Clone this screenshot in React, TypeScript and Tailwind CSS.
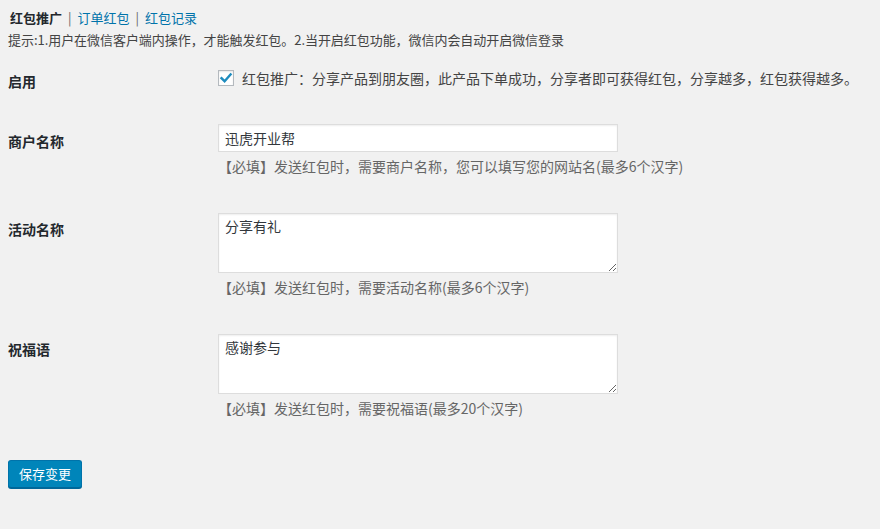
import React from 'react';

const font = "font-['Noto_Sans_CJK_SC','Noto_Sans',sans-serif]";

const Checkbox = () => (
  <span className="w-4 h-4 shrink-0 bg-white border border-[#b4b9be] shadow-[inset_0_1px_2px_rgba(0,0,0,0.1)] flex items-center justify-center">
    <svg width="14" height="14" viewBox="0 0 14 14">
      <path d="M2.5 7.2 L5.6 10.2 L11.6 3.4" fill="none" stroke="#1e8cbe" strokeWidth="2.4" strokeLinecap="square" />
    </svg>
  </span>
);

const Desc = ({ children }: { children: React.ReactNode }) => (
  <p className="mt-1 text-[14px] leading-5 text-[#666]">{children}</p>
);

export default function App() {
  return (
    <div className={`min-h-[529px] bg-[#f1f1f1] px-2 ${font}`}>
      {/* tabs */}
      <div className="pt-[9px] pl-[2px] text-[13px] leading-[18px] flex items-center">
        <span className="font-bold text-[#23282d]">红包推广</span>
        <span className="text-[#666] px-[6px]">|</span>
        <a className="text-[#0073aa]">订单红包</a>
        <span className="text-[#666] px-[6px]">|</span>
        <a className="text-[#0073aa]">红包记录</a>
      </div>
      <p className="mt-1 text-[13px] leading-[18px] tracking-[-0.05px] text-[#444]">
        提示:1.用户在微信客户端内操作，才能触发红包。2.当开启红包功能，微信内会自动开启微信登录
      </p>

      {/* form table */}
      <div className="flex h-[63px]">
        <div className="w-[210px] pt-[22px] text-[14px] leading-5 font-bold text-[#23282d]">启用</div>
        <div className="pt-[19px]">
          <label className="flex items-center gap-2 text-[14px] leading-5 text-[#444]">
            <Checkbox />
            红包推广：分享产品到朋友圈，此产品下单成功，分享者即可获得红包，分享越多，红包获得越多。
          </label>
        </div>
      </div>

      <div className="flex pb-6">
        <div className="w-[210px] pt-[19px] text-[14px] leading-5 font-bold text-[#23282d]">商户名称</div>
        <div className="pt-3">
          <input
            defaultValue="迅虎开业帮"
            className="block w-[400px] h-[28px] bg-white border border-[#ddd] shadow-[inset_0_1px_2px_rgba(0,0,0,0.07)] px-[6px] text-[14px] text-[#32373c] outline-none"
          />
          <Desc>【必填】发送红包时，需要商户名称，您可以填写您的网站名(最多6个汉字)</Desc>
        </div>
      </div>

      <div className="flex pb-[23px]">
        <div className="w-[210px] pt-[19px] text-[14px] leading-5 font-bold text-[#23282d]">活动名称</div>
        <div className="pt-[13px]">
          <textarea
            defaultValue="分享有礼"
            className="block w-[400px] h-[60px] bg-white border border-[#ddd] shadow-[inset_0_1px_2px_rgba(0,0,0,0.07)] px-[6px] pt-[2px] text-[14px] leading-5 text-[#32373c] outline-none"
          />
          <Desc>【必填】发送红包时，需要活动名称(最多6个汉字)</Desc>
        </div>
      </div>

      <div className="flex">
        <div className="w-[210px] pt-[19px] text-[14px] leading-5 font-bold text-[#23282d]">祝福语</div>
        <div className="pt-[14px]">
          <textarea
            defaultValue="感谢参与"
            className="block w-[400px] h-[60px] bg-white border border-[#ddd] shadow-[inset_0_1px_2px_rgba(0,0,0,0.07)] px-[6px] pt-[2px] text-[14px] leading-5 text-[#32373c] outline-none"
          />
          <Desc>【必填】发送红包时，需要祝福语(最多20个汉字)</Desc>
        </div>
      </div>

      <div className="pt-[42px]">
        <button className="h-[28px] px-[10px] pb-px bg-[#0085ba] border border-[#0073aa] border-b-[#006799] rounded-[3px] shadow-[0_1px_0_#006799] text-white text-[13px] leading-[26px]">
          保存变更
        </button>
      </div>
    </div>
  );
}
